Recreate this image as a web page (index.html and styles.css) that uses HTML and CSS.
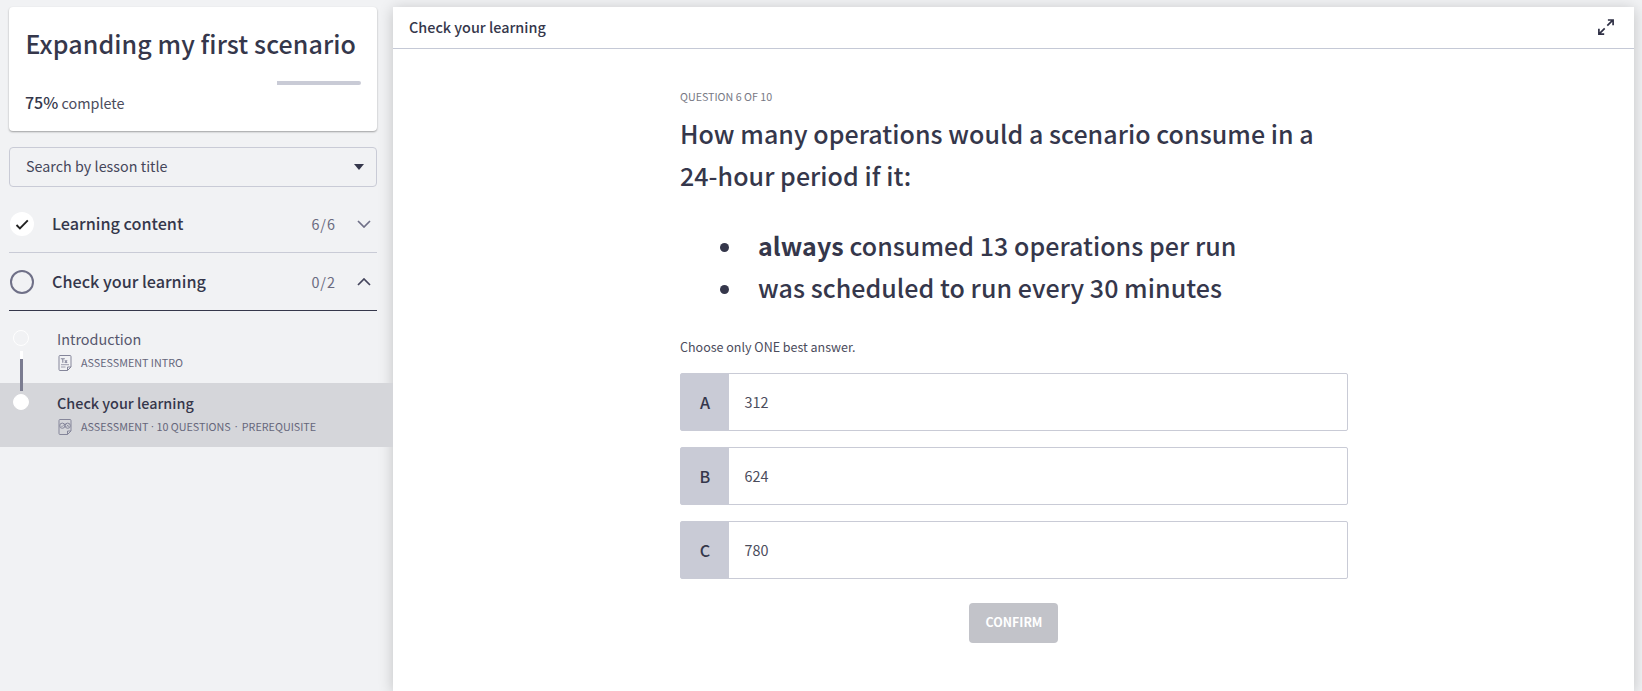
FILE: index.html
```html
<!DOCTYPE html>
<html lang="en">
<head>
<meta charset="utf-8">
<title>Expanding my first scenario</title>
<link rel="stylesheet" href="styles.css">
</head>
<body>
<div class="app">
  <aside class="sidebar">
    <section class="course">
      <h1 class="course-title"><span>Expanding my first scenario</span></h1>
      <div class="progress"><div class="progress-rest"></div></div>
      <p class="complete"><b>75%</b> <span>complete</span></p>
    </section>
    <div class="search"><span>Search by lesson title</span><i class="caret"></i></div>
    <div class="module">
      <svg class="status" viewBox="0 0 24 24"><circle cx="12" cy="12" r="12" fill="#fff"/><path d="M6.500 13l3.400 3.400L17.800 8.300" fill="none" stroke="#222" stroke-width="1.900"/></svg>
      <span class="module-name">Learning content</span>
      <span class="count">6/6</span>
      <svg class="chevron" viewBox="0 0 14 8"><path d="M1 1l6 6 6-6" fill="none" stroke="#6f7087" stroke-width="1.700"/></svg>
    </div>
    <div class="module open">
      <svg class="status" viewBox="0 0 24 24"><circle cx="12" cy="12" r="11" fill="none" stroke="#6f7087" stroke-width="2"/></svg>
      <span class="module-name">Check your learning</span>
      <span class="count">0/2</span>
      <svg class="chevron" viewBox="0 0 14 8"><path d="M1 7l6-6 6 6" fill="none" stroke="#44455c" stroke-width="1.700"/></svg>
    </div>
    <div class="lessons">
      <div class="lesson">
        <i class="dot"></i><i class="link"></i>
        <div class="lesson-name"><span>Introduction</span></div>
        <div class="meta">
          <svg class="doc" viewBox="0 0 14 16" fill="none" stroke="#85869a"><path d="M2 .5h10q1 0 1 1v10.500l-3.500 3.500H2q-1 0-1-1v-13Q1 .5 2 .5zM9.500 15.500v-3.500h3.500"/><path d="M2.800 3.800h4M4.800 3.800v4M6.800 5.300l2.300 2.500M9.100 5.300L6.800 7.800" stroke-width="1.100"/><path d="M3 9.700h8M3 12h4.500" stroke-width=".8"/></svg>
          <span>ASSESSMENT INTRO</span>
        </div>
      </div>
      <div class="lesson current">
        <i class="dot"></i>
        <div class="lesson-name"><span>Check your learning</span></div>
        <div class="meta">
          <svg class="doc" viewBox="0 0 14 16" fill="none" stroke="#85869a"><path d="M2 .5h10q1 0 1 1v10.500l-3.500 3.500H2q-1 0-1-1v-13Q1 .5 2 .5zM9.500 15.500v-3.500h3.500"/><circle cx="4.300" cy="6.700" r="2.600"/><circle cx="9.700" cy="6.700" r="2.600"/><path d="M3 6.700l1 1 3-3M8.600 5.600l2.200 2.200M10.800 5.600L8.600 7.800" stroke-width=".8"/></svg>
          <span>ASSESSMENT</span><span class="sep">·</span><span>10 QUESTIONS</span><span class="sep wide">·</span><span>PREREQUISITE</span>
        </div>
      </div>
    </div>
  </aside>
  <main class="player">
    <header class="player-head">
      <span>Check your learning</span>
      <svg class="expand" viewBox="0 0 16 16" fill="none" stroke="#2f3045" stroke-width="1.700"><path d="M9.300 6.700l5.500-5.500M9.900 1h5.200v5.200M6.700 9.300l-5.500 5.500M.9 9.800v5.300h5.300"/></svg>
    </header>
    <div class="quiz">
      <div class="number"><span>QUESTION 6 OF 10</span></div>
      <h2 class="question">How many operations would a scenario consume in a<br>24-hour period if it:</h2>
      <ul class="conditions">
        <li><strong>always</strong><span> consumed 13 operations per run</span></li>
        <li><span>was scheduled to run every 30 minutes</span></li>
      </ul>
      <p class="hint"><span>Choose only ONE best answer.</span></p>
      <div class="options">
        <div class="option"><b>A</b><span>312</span></div>
        <div class="option"><b>B</b><span>624</span></div>
        <div class="option"><b>C</b><span>780</span></div>
      </div>
      <button class="confirm"><span>CONFIRM</span></button>
    </div>
  </main>
</div>
</body>
</html>
```
FILE: styles.css
```css
* { box-sizing: border-box; }
body {
  margin: 0;
  height: 691px;
  overflow: hidden;
  background: #f1f2f4;
  color: #35374b;
  font-family: "Noto Sans CJK SC", "Open Sans", sans-serif;
  font-weight: 400;
  white-space: nowrap;
}
h1, h2, p, ul { margin: 0; padding: 0; }
.app { display: flex; height: 691px; padding: 7px 8px 0 0; }
.sidebar { width: 393px; flex: none; }
.course {
  margin-left: 9px;
  width: 368px;
  height: 124px;
  padding: 15px 16px 0;
  background: #fff;
  border-radius: 4px;
  box-shadow: 0 1px 2px rgba(0, 0, 0, .35);
}
.course-title { padding-left: .5px; font-size: 25px; line-height: 42px; font-weight: 500; letter-spacing: .09px; }
.progress { display: flex; justify-content: flex-end; height: 4px; margin-top: 17px; }
.progress-rest { width: 84px; background: #c9cbd6; border-radius: 0 2px 2px 0; }
.complete { margin-top: 4px; font-size: 14.4px; line-height: 26px; color: #4b4c5c; }
.complete b { font-size: 16px; font-weight: 500; color: #35374b; }
.search {
  display: flex;
  align-items: center;
  justify-content: space-between;
  width: 368px;
  height: 40px;
  margin: 16px 0 0 9px;
  padding: 0 12px 0 16px;
  border: 1px solid #c9cbd6;
  border-radius: 4px;
  font-size: 14.3px;
  color: #45465a;
}
.search span { padding-bottom: 3px; letter-spacing: .03px; }
.caret { border: 5px solid transparent; border-top: 6px solid #35374b; border-bottom: 0; }
.module {
  display: flex;
  align-items: center;
  width: 368px;
  height: 58px;
  margin-left: 9px;
  padding: 0 6px 0 1px;
  border-bottom: 1px solid #c9cbd6;
}
.search + .module { margin-top: 8px; }
.module.open { border-color: #35374b; }
.status { width: 24px; height: 24px; }
.module-name { margin-left: 18px; padding-bottom: 2px; font-size: 16.2px; font-weight: 500; }
.count { margin-left: auto; font-size: 14.4px; letter-spacing: 1px; color: #6a6b80; }
.chevron { width: 14px; height: 8px; margin-left: 21px; }
.lessons { padding-top: 8px; }
.lesson { position: relative; height: 64px; padding: 11px 0 0 57px; }
.current { background: #d5d6da; }
.dot {
  position: absolute;
  left: 13px;
  top: 11px;
  width: 16px;
  height: 16px;
  border: 1px solid #fff;
  border-radius: 50%;
}
.current .dot { background: #fff; }
.link {
  position: absolute;
  z-index: 1;
  left: 20px;
  top: 32px;
  width: 2.5px;
  height: 40px;
  border-top: 8px solid #fff;
  background: #7b7c90;
}
.lesson-name { font-size: 14.4px; line-height: 18px; color: #56576d; }
.current .lesson-name { font-weight: 500; color: #35374b; }
.meta { display: flex; align-items: center; height: 16px; margin-top: 7px; font-size: 10.75px; color: #65667b; }
.meta span { padding-bottom: 2px; }
.meta .sep { width: 8px; font-family: "Open Sans", sans-serif; text-align: center; }
.meta .sep.wide { width: 11px; }
.doc { width: 14px; height: 16px; margin: 0 9px 0 1px; }
.player {
  flex: 1;
  height: 684px;
  background: #fff;
  box-shadow: 0 2px 14px rgba(0, 0, 0, .2);
}
.player-head {
  display: flex;
  align-items: center;
  justify-content: space-between;
  height: 42px;
  padding: 0 20px 2px 16px;
  border-bottom: 1px solid #c5c9d6;
  font-size: 14.4px;
  font-weight: 500;
}
.expand { width: 16px; height: 16px; }
.quiz { width: 668px; margin-left: 287px; padding-top: 37px; }
.number { font-size: 10.7px; line-height: 22px; color: #777884; }
.question, .conditions { font-size: 25px; line-height: 42px; font-weight: 500; letter-spacing: .05px; }
.question { margin-top: 4px; }
.conditions { margin-top: 28px; padding-left: 40px; list-style: none; }
.conditions li { display: flex; align-items: center; white-space: pre; }
.conditions li::before { content: ""; width: 9px; height: 9px; margin: 4px 29px 0 0; border-radius: 50%; background: #35374b; }
.conditions strong { font-weight: 700; }
.hint { margin-top: 28px; font-size: 12.5px; line-height: 22px; color: #4b4c5c; }
.options { display: grid; gap: 16px; margin-top: 15px; }
.option {
  display: flex;
  height: 58px;
  border: 1px solid #c9cbd6;
  border-radius: 2px;
  line-height: 56px;
}
.option b { width: 48px; background: #c9cbd6; text-align: center; font-size: 16.2px; font-weight: 500; }
.option span { padding-left: 15.5px; font-size: 14.4px; color: #4b4c5c; }
.confirm {
  display: block;
  width: 89px;
  height: 40px;
  margin: 24px 0 0 289px;
  padding: 0 0 2px 1px;
  border: 0;
  border-radius: 4px;
  background: #c2c3c9;
  color: #fff;
  font-family: inherit;
  font-size: 12.4px;
  font-weight: 700;
}
```
